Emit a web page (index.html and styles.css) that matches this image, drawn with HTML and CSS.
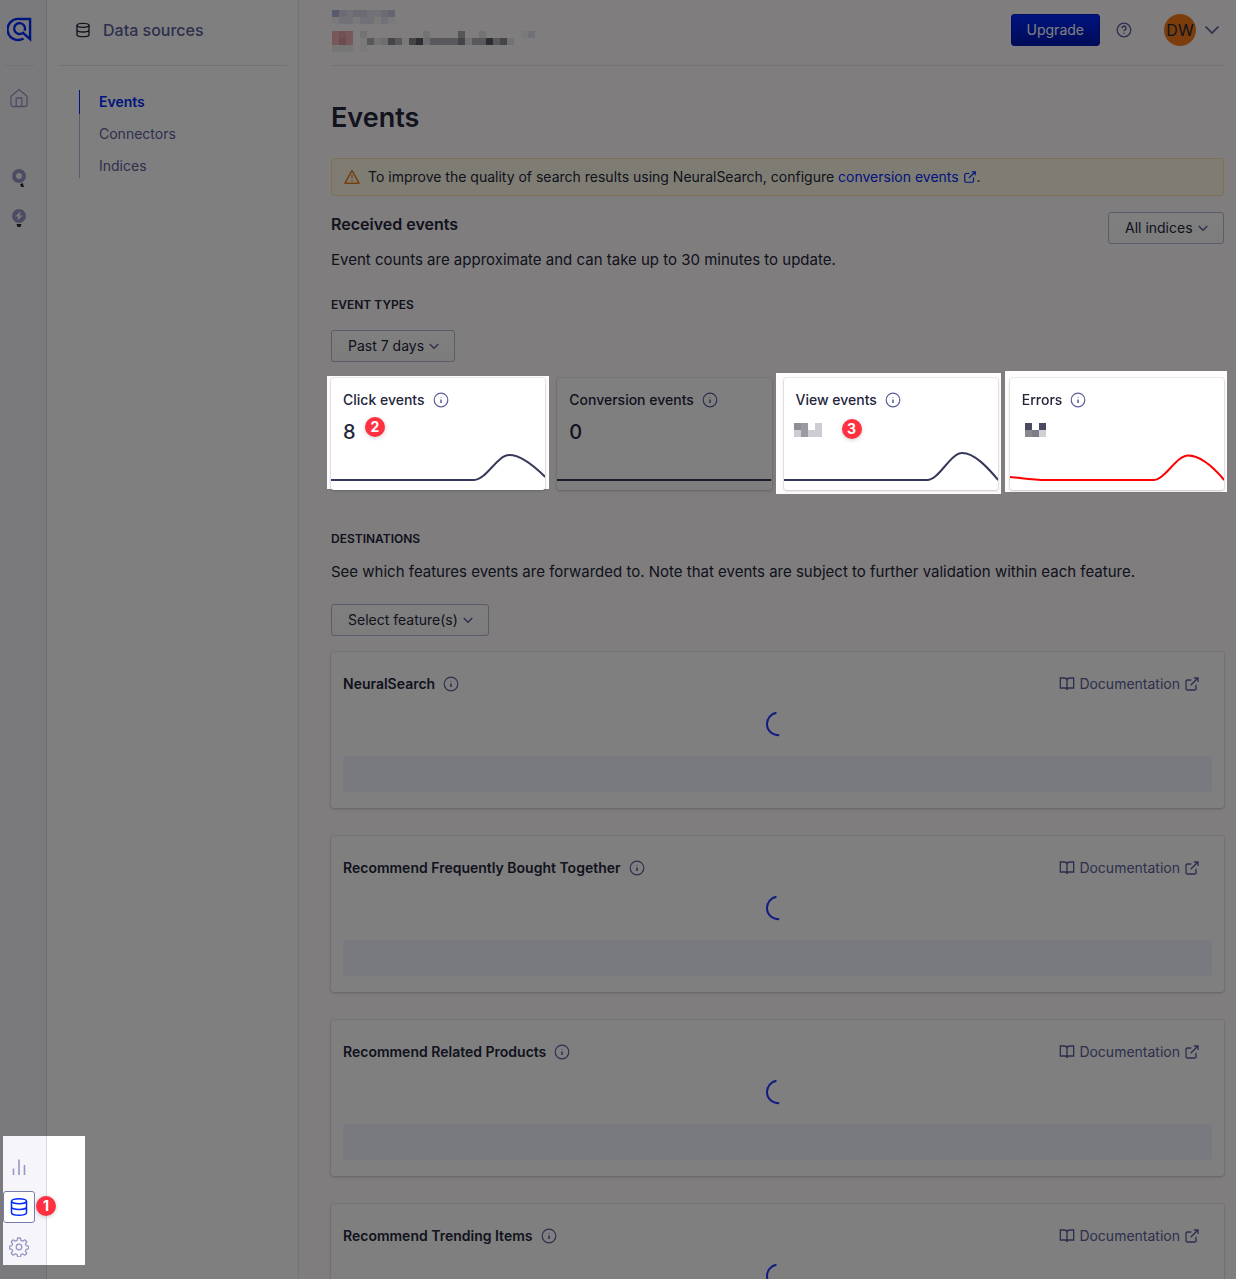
FILE: index.html
```html
<!DOCTYPE html>
<html lang="en">
<head>
<meta charset="utf-8">
<title>Events</title>
<meta name="viewport" content="width=device-width, initial-scale=1">
<link rel="stylesheet" href="styles.css">
</head>
<body>
<svg class="sprite" aria-hidden="true">
  <symbol id="info" viewBox="0 0 16 16"><circle cx="8" cy="8" r="6.8"/><path d="M8 7.6v3.3M8 5v.6" stroke-width="1.5"/></symbol>
  <symbol id="down" viewBox="0 0 12 12"><path d="M1.7 4 6 8.2 10.300 4"/></symbol>
  <symbol id="external" viewBox="0 0 24 24"><path d="M18 13v6a2 2 0 0 1-2 2H5a2 2 0 0 1-2-2V8a2 2 0 0 1 2-2h6M15 3h6v6M10 14 21 3"/></symbol>
  <symbol id="book" viewBox="0 0 24 24"><path d="M2 3h6a4 4 0 0 1 4 4v14a3 3 0 0 0-3-3H2zM22 3h-6a4 4 0 0 0-4 4v14a3 3 0 0 1 3-3h7z"/></symbol>
  <symbol id="database" viewBox="0 0 24 24"><ellipse cx="12" cy="5" rx="9" ry="3"/><path d="M21 12c0 1.660-4 3-9 3s-9-1.340-9-3M3 5v14c0 1.660 4 3 9 3s9-1.340 9-3V5"/></symbol>
  <symbol id="spinner" viewBox="0 0 28 28"><path d="M12.500 2.800C7 3.600 3 8.500 3 14c0 6.400 5 11.300 12.300 11.200"/></symbol>
</svg>

<div class="app">
  <nav class="rail" aria-label="Products">
    <a class="rail-logo" href="#" aria-label="Algolia">
      <svg width="25" height="25" viewBox="0 0 26 26" class="logo"><path d="M17.200 22.400A11 11 0 1 1 12.800 2H24v21L15.800 15.700"/><path d="M16.600 16.500A5.700 5.700 0 1 1 18.300 14.300"/></svg>
    </a>
    <a class="rail-item rail-home" href="#" aria-label="Home">
      <svg class="icon" width="20" height="20" viewBox="0 0 20 20" stroke-width="1.300"><path d="M2 8.200 10 1.500l8 6.700v8.300a2 2 0 0 1-2 2H4a2 2 0 0 1-2-2zM7.200 18.500V10h5.600v8.500"/></svg>
    </a>
    <a class="rail-item" href="#" aria-label="Search">
      <svg width="20" height="20" viewBox="0 0 20 20"><path fill="#9698c3" fill-rule="evenodd" d="M10 1a7 7 0 1 1 0 14 7 7 0 0 1 0-14zm0 4a3 3 0 1 0 0 6 3 3 0 0 0 0-6z"/><path fill="#23263b" d="m11 16.200 2.800-1.200 1.200 4h-2.800z"/></svg>
    </a>
    <a class="rail-item" href="#" aria-label="Recommend">
      <svg width="20" height="20" viewBox="0 0 20 20"><circle cx="10" cy="8" r="7" fill="#9698c3"/><path fill="#f5f5fa" d="m11.500 3.500-5.300 5h3L8.500 12.500l5.300-5h-3z"/><path fill="#23263b" d="M7.500 16h5l-1 3h-3z"/></svg>
    </a>
    <div class="rail-bottom spot">
      <a class="rail-item" href="#" aria-label="Analytics">
        <svg class="icon" width="20" height="20" viewBox="0 0 20 20" stroke-width="1.600"><path d="M4.500 11.500V18M10 2.500V18M15.500 8V18"/></svg>
      </a>
      <a class="rail-item rail-active" href="#" aria-label="Data sources" aria-current="page">
        <svg class="icon" width="20" height="20" stroke-width="1.800"><use href="#database"/></svg>
        <span class="marker marker-1">1</span>
      </a>
      <a class="rail-item" href="#" aria-label="Settings">
        <svg class="icon" width="20" height="20" viewBox="0 0 20 20" stroke-width="1.300"><circle cx="10" cy="10" r="2.800"/><path d="M8.600 1h2.800l.5 2.400 1.800.8 2.100-1.400 2 2-1.400 2.100.8 1.800 2.300.4v2.800l-2.300.4-.8 1.800 1.400 2.100-2 2-2.100-1.400-1.800.8-.5 2.400H8.600l-.5-2.400-1.800-.8-2.100 1.400-2-2 1.400-2.100-.8-1.800L.6 11.900V9.100l2.200-.4.800-1.800-1.400-2.100 2-2 2.100 1.400 1.800-.8z" stroke-linejoin="round"/></svg>
      </a>
    </div>
  </nav>

  <aside class="panel">
    <div class="panel-head">
      <svg class="icon" width="16" height="16" stroke-width="2"><use href="#database"/></svg>
      <span>Data sources</span>
    </div>
    <ul class="panel-nav">
      <li class="current"><a href="#" aria-current="page">Events</a></li>
      <li><a href="#">Connectors</a></li>
      <li><a href="#">Indices</a></li>
    </ul>
  </aside>

  <div class="main">
    <header class="topbar">
      <svg class="mosaic" width="210" height="44" viewBox="0 0 210 44" shape-rendering="crispEdges" role="img" aria-label="Application name hidden">
        <g fill="#e2e2ee"><path fill="#b4b4dc" d="M0 0h7v7H0z"/><path fill="#d6d6e6" d="M7 0h7v7H7zM21 0h14v7H21zM49 0h7v7H49z"/><path d="M14 0h7v7h-7zM35 0h14v7H35zM7 7h14v7H7zM28 7h14v7H28zM49 7h7v7H49z"/><path fill="#cacae2" d="M56 0h7v7H56z"/><path fill="#f4f4f4" d="M0 7h7v7H0zM21 7h7v7H21zM42 7h7v7H42zM56 7h7v7H56z"/></g>
        <path fill="#f0b0b6" d="M0 21h21v14H0z"/><path fill="#e4a4a6" d="M7 21h7v14H7z"/><path fill="#d8989c" d="M7 28h7v7H7z"/><path fill="#ececec" d="M0 35h21v7H0z"/>
        <path fill="#e6e6e6" d="M28 21h7v7h-7zM91 21h7v7h-7zM147 21h7v7h-7zM42 28h7v7h-7zM133 28h7v7h-7zM175 28h7v7h-7z"/>
        <path fill="#f4f4f4" d="M28 28h7v14h-7zM70 28h7v7h-7zM189 21h7v7h-7z"/>
        <path fill="#b2b2ba" d="M35 28h7v7h-7zM63 28h7v7h-7zM98 28h28v7H98zM140 28h14v7h-14zM161 28h7v7h-7z"/>
        <path fill="#dcdce0" d="M49 28h7v7h-7zM91 28h7v7h-7z"/>
        <path fill="#8a8a90" d="M56 28h7v7h-7zM77 28h7v7h-7zM168 28h7v7h-7zM126 28h7v7h-7z"/><path fill="#aeaeb0" d="M126 21h7v7h-7z"/>
        <path fill="#5c5c64" d="M84 28h7v7h-7zM154 28h7v7h-7z"/><path fill="#e0e0f0" d="M196 21h7v7h-7z"/>
      </svg>
      <div class="topbar-actions">
        <button class="btn-primary" type="button">Upgrade</button>
        <button class="btn-plain help" type="button" aria-label="Help">
          <svg class="icon" width="16" height="16" viewBox="0 0 16 16" stroke-width="1.300"><circle cx="8" cy="8" r="6.800"/><path d="M6 6.200a2 2 0 1 1 2.900 1.700c-.6.300-.9.600-.9 1.100M8 10.800v1" stroke-width="1.500"/></svg>
        </button>
        <button class="btn-plain account" type="button" aria-label="Account DW">
          <span class="avatar">DW</span>
          <svg class="icon" width="16" height="16" viewBox="0 0 16 16" stroke-width="1.700"><path d="m1.500 4.500 6.500 6.500 6.500-6.500"/></svg>
        </button>
      </div>
    </header>

    <main>
      <h1>Events</h1>
      <div class="alert">
        <svg class="icon" width="16" height="16" viewBox="0 0 16 16" stroke-width="1.500"><path d="M8 1.600 15 14.200H1z" stroke-linejoin="round"/><path d="M8 5.800v3.800M8 11v1.200" stroke-width="1.200"/></svg>
        <p>To improve the quality of search results using NeuralSearch, configure <a href="#">conversion events <svg class="icon" width="14" height="14" stroke-width="2"><use href="#external"/></svg></a>.</p>
      </div>

      <section>
        <div class="section-head">
          <h2>Received events</h2>
          <label class="select"><select class="w-indices" aria-label="Index"><option>All indices</option></select><svg class="icon" width="12" height="12" stroke-width="1.400"><use href="#down"/></svg></label>
        </div>
        <p class="lead">Event counts are approximate and can take up to 30 minutes to update.</p>
        <h3>Event types</h3>
        <label class="select"><select class="w-period" aria-label="Period"><option>Past 7 days</option></select><svg class="icon" width="12" height="12" stroke-width="1.400"><use href="#down"/></svg></label>
        <div class="stats">
          <article class="stat spot spot-click">
            <h4>Click events <svg class="icon" width="16" height="16" stroke-width="1.200"><use href="#info"/></svg></h4>
            <p class="value">8</p>
            <span class="marker marker-2">2</span>
            <svg class="chart" viewBox="0 0 214 40" preserveAspectRatio="none"><path d="M0 30H143C155 30 166 5 178 5S203 16 214 27"/></svg>
          </article>
          <article class="stat">
            <h4>Conversion events <svg class="icon" width="16" height="16" stroke-width="1.200"><use href="#info"/></svg></h4>
            <p class="value">0</p>
            <svg class="chart" viewBox="0 0 214 40" preserveAspectRatio="none"><path d="M0 30H214"/></svg>
          </article>
          <article class="stat spot spot-view">
            <h4>View events <svg class="icon" width="16" height="16" stroke-width="1.200"><use href="#info"/></svg></h4>
            <p class="value"><svg class="mosaic-views" width="28" height="14" viewBox="0 0 28 14" shape-rendering="crispEdges" role="img" aria-label="Value hidden"><path fill="#8e8e94" d="M0 0h7v7H0z"/><path fill="#9a9aa0" d="M7 0h7v14H7z"/><path fill="#ccccd2" d="M0 7h7v7H0zM14 7h7v7h-7zM21 0h7v14h-7z"/></svg></p>
            <span class="marker marker-3">3</span>
            <svg class="chart" viewBox="0 0 214 40" preserveAspectRatio="none"><path d="M0 30H143C155 30 166 3 178 3S203 17 214 30"/></svg>
          </article>
          <article class="stat spot spot-errors">
            <h4>Errors <svg class="icon" width="16" height="16" stroke-width="1.200"><use href="#info"/></svg></h4>
            <p class="value"><svg class="mosaic-errors" width="21" height="14" viewBox="0 0 21 14" shape-rendering="crispEdges" role="img" aria-label="Value hidden"><path fill="#4a4a60" d="M0 0h7v7H0zM14 0h7v7h-7z"/><path fill="#88888c" d="M0 7h7v7H0z"/><path fill="#7c7c88" d="M7 7h7v7H7z"/><path fill="#d0d0d2" d="M14 7h7v7h-7z"/></svg></p>
            <svg class="chart chart-red" viewBox="0 0 214 40" preserveAspectRatio="none"><path d="M0 27C12 28 22 30 36 30H143C155 30 166 5.500 178 5.500S203 17 214 30"/></svg>
          </article>
        </div>
      </section>

      <section>
        <h3>Destinations</h3>
        <p class="lead">See which features events are forwarded to. Note that events are subject to further validation within each feature.</p>
        <label class="select"><select class="w-feature" aria-label="Features"><option>Select feature(s)</option></select><svg class="icon" width="12" height="12" stroke-width="1.400"><use href="#down"/></svg></label>
        <div class="destinations">
          <article class="dest">
            <div class="dest-head"><h4>NeuralSearch <svg class="icon" width="16" height="16" stroke-width="1.200"><use href="#info"/></svg></h4><a href="#"><svg class="icon" width="16" height="16" stroke-width="2"><use href="#book"/></svg>Documentation<svg class="icon" width="16" height="16" stroke-width="2"><use href="#external"/></svg></a></div>
            <svg class="spinner" width="28" height="28"><use href="#spinner"/></svg>
            <div class="placeholder"></div>
          </article>
          <article class="dest">
            <div class="dest-head"><h4>Recommend Frequently Bought Together <svg class="icon" width="16" height="16" stroke-width="1.200"><use href="#info"/></svg></h4><a href="#"><svg class="icon" width="16" height="16" stroke-width="2"><use href="#book"/></svg>Documentation<svg class="icon" width="16" height="16" stroke-width="2"><use href="#external"/></svg></a></div>
            <svg class="spinner" width="28" height="28"><use href="#spinner"/></svg>
            <div class="placeholder"></div>
          </article>
          <article class="dest">
            <div class="dest-head"><h4>Recommend Related Products <svg class="icon" width="16" height="16" stroke-width="1.200"><use href="#info"/></svg></h4><a href="#"><svg class="icon" width="16" height="16" stroke-width="2"><use href="#book"/></svg>Documentation<svg class="icon" width="16" height="16" stroke-width="2"><use href="#external"/></svg></a></div>
            <svg class="spinner" width="28" height="28"><use href="#spinner"/></svg>
            <div class="placeholder"></div>
          </article>
          <article class="dest">
            <div class="dest-head"><h4>Recommend Trending Items <svg class="icon" width="16" height="16" stroke-width="1.200"><use href="#info"/></svg></h4><a href="#"><svg class="icon" width="16" height="16" stroke-width="2"><use href="#book"/></svg>Documentation<svg class="icon" width="16" height="16" stroke-width="2"><use href="#external"/></svg></a></div>
            <svg class="spinner" width="28" height="28"><use href="#spinner"/></svg>
            <div class="placeholder"></div>
          </article>
        </div>
      </section>
    </main>
  </div>
</div>
<div class="scrim"></div>
</body>
</html>
```
FILE: styles.css
```css
:root {
  --ink: #23263b;
  --muted: #5a5e9a;
  --blue: #0028ff;
  --line: #e4e4ee;
}

* { box-sizing: border-box; }

body {
  margin: 0;
  font: 14px/24px Inter, "Liberation Sans", sans-serif;
  color: var(--ink);
  background: #fffafb;
}

h1, h2, h3, h4, p, ul { margin: 0; padding: 0; }
a { color: inherit; text-decoration: none; }
button, select { font: inherit; color: inherit; margin: 0; }

.sprite { display: none; }
.icon { fill: none; stroke: currentColor; flex: none; }

.app {
  display: flex;
  height: 100vh;
  overflow: hidden;
}

/* Dimming layer; highlighted parts are lifted above it */
.scrim {
  position: fixed;
  inset: 0;
  z-index: 1;
  background: rgba(0, 0, 0, 0.5);
  pointer-events: none;
}

.spot { position: relative; z-index: 2; }
.spot::before {
  content: "";
  position: absolute;
  z-index: -1;
  background: #fffcfd;
}

.marker {
  position: absolute;
  width: 20px;
  height: 20px;
  border-radius: 50%;
  background: #ff3040;
  color: #fff;
  font-size: 14px;
  font-weight: 700;
  line-height: 20px;
  text-align: center;
  box-shadow: 0 1px 4px rgba(0, 0, 0, 0.2);
}
.marker-1 { left: 32px; top: 4px; }
.marker-2 { left: 34px; top: 39px; }
.marker-3 { left: 58px; top: 41px; }

/* Icon rail */
.rail {
  flex: none;
  width: 47px;
  padding: 0 11px 16px 3px;
  display: flex;
  flex-direction: column;
  gap: 8px;
  background: #f5f5fa;
  border-right: 1px solid #d8d8e6;
  color: #9698c3;
}
.rail-logo {
  height: 66px;
  padding: 17px 0 0 4px;
  border-bottom: 1px solid var(--line);
}
.logo { display: block; fill: none; stroke: var(--blue); stroke-width: 2.5px; }
.rail-item {
  display: flex;
  align-items: center;
  justify-content: center;
  width: 32px;
  height: 32px;
}
.rail-home { margin: 8px 0 40px; }
.rail-bottom {
  margin-top: auto;
  display: flex;
  flex-direction: column;
  gap: 8px;
}
.rail-bottom::before {
  inset: -15px -50px -2px 0;
  background: linear-gradient(90deg, #f5f5fa 43px, #d8d8e6 43px, #d8d8e6 44px, #fff 44px);
}
.rail-active {
  position: relative;
  color: var(--blue);
  background: #fff;
  border: 1px solid #777aaf;
  border-radius: 3px;
}

/* Section panel */
.panel {
  flex: none;
  width: 252px;
  padding: 0 11px 0 12px;
  background: #fff;
  border-right: 1px solid var(--line);
}
.panel-head {
  display: flex;
  align-items: center;
  gap: 12px;
  height: 66px;
  padding: 0 16px 6px;
  border-bottom: 1px solid var(--line);
  font-size: 16px;
  font-weight: 500;
  color: var(--muted);
}
.panel-head .icon { color: var(--ink); }
.panel-nav {
  display: flex;
  flex-direction: column;
  gap: 8px;
  margin: 24px 0 0 20px;
  border-left: 1px solid #b6b7d5;
  list-style: none;
  color: var(--muted);
}
.panel-nav li { padding-left: 19px; }
.panel-nav .current {
  margin-left: -1px;
  border-left: 1px solid var(--blue);
  color: var(--blue);
  font-weight: 600;
}

/* Main column */
.main {
  flex: 1;
  min-width: 0;
  padding: 0 12px 0 32px;
}
.topbar {
  display: flex;
  justify-content: space-between;
  align-items: flex-start;
  height: 66px;
  border-bottom: 1px solid var(--line);
}
.mosaic { margin: 10px 0 0 1px; }
.topbar-actions { display: flex; align-items: center; padding-top: 14px; }
.btn-primary {
  height: 32px;
  padding: 0 15px;
  border: 1px solid #0018b8;
  border-radius: 3px;
  background: linear-gradient(#0028ff, #0016b0);
  color: #fff;
}
.btn-plain { display: flex; align-items: center; padding: 0; border: 0; background: none; color: var(--muted); }
.help { margin: 0 32px 0 16px; }
.account { gap: 8px; padding-right: 4px; }
.avatar {
  width: 32px;
  height: 32px;
  border-radius: 50%;
  background: #f97a18;
  color: var(--ink);
  font-size: 16px;
  line-height: 32px;
  text-align: center;
}

h1 { padding: 36px 0 24px; font-size: 27px; line-height: 32px; font-weight: 600; }
h2 { font-size: 16px; line-height: 24px; font-weight: 600; }
h3 { font-size: 12px; line-height: 18px; font-weight: 600; text-transform: uppercase; }
h4 { display: flex; align-items: center; gap: 8px; font-size: 14px; line-height: 24px; font-weight: 600; }
h4 .icon { color: var(--muted); }

.alert {
  display: flex;
  align-items: center;
  gap: 8px;
  min-height: 38px;
  padding: 0 12px;
  border: 1px solid #ffe0a8;
  border-radius: 3px;
  background: #fffbe6;
}
.alert > .icon { color: #ee7a1c; }
.alert a { color: var(--blue); }
.alert a .icon { vertical-align: -2px; }

.section-head { display: flex; justify-content: space-between; padding-top: 16px; }
.lead { font-size: 15px; line-height: 24px; }
.section-head + .lead { margin: 4px 0 24px; }
h3 + .select { margin-top: 16px; }
h3 + .lead { margin: 12px 0 20px; }

.select { display: grid; width: fit-content; }
.select select {
  grid-area: 1 / 1;
  height: 32px;
  padding: 0 16px;
  appearance: none;
  border: 1px solid #b6b7d5;
  border-radius: 3px;
  background: linear-gradient(#fff, #f9f9fc);
}
.select .icon {
  grid-area: 1 / 1;
  place-self: center end;
  margin-right: 15px;
  color: var(--muted);
  pointer-events: none;
}
.w-indices { width: 116px; }
.w-period { width: 124px; }
.w-feature { width: 158px; }

.stats {
  display: grid;
  grid-template-columns: repeat(4, 1fr);
  gap: 12px;
  margin: 16px 0 40px;
}
.stat, .dest, .stat.spot::after {
  background: #fff;
  border-radius: 3px;
  box-shadow: 0 0 0 1px rgba(35, 38, 59, 0.06), 0 1px 3px rgba(35, 38, 59, 0.2);
}
.stat { padding-top: 10px; }
.stat.spot { background: none; box-shadow: none; }
.stat h4, .value { padding: 0 12px; }
.stat h4 { font-weight: 500; }
.stat.spot::after {
  content: "";
  position: absolute;
  inset: 0;
  z-index: -1;
}
.value { display: flex; align-items: flex-start; height: 24px; margin-top: 8px; font-size: 20px; line-height: 24px; font-weight: 500; }
.mosaic-views { margin: 3px 0 0 -2px; }
.mosaic-errors { margin: 3px 0 0 3px; }
.chart {
  display: block;
  width: 100%;
  height: 40px;
  margin-top: 6px;
  fill: none;
  stroke: #36395a;
  stroke-width: 2px;
}
.chart-red { stroke: #f00; }

.spot-click::before { inset: -2px -4px 1px -4px; }
.spot-view::before { inset: -5px -3px -4px -8px; }
.spot-errors::before { inset: -7px -3px -2px -5px; }

.destinations { display: grid; gap: 28px; margin-top: 16px; }
.dest { display: flex; flex-direction: column; height: 156px; padding: 20px 12px 16px; }
.dest-head { display: flex; justify-content: space-between; }
.dest-head a { display: flex; align-items: center; gap: 4px; padding-right: 12px; color: var(--muted); }
.spinner { align-self: center; margin: 14px 0 18px; fill: none; stroke: #2038ff; stroke-width: 2px; }
.placeholder { height: 36px; border-radius: 3px; background: #f3f5ff; }
```
